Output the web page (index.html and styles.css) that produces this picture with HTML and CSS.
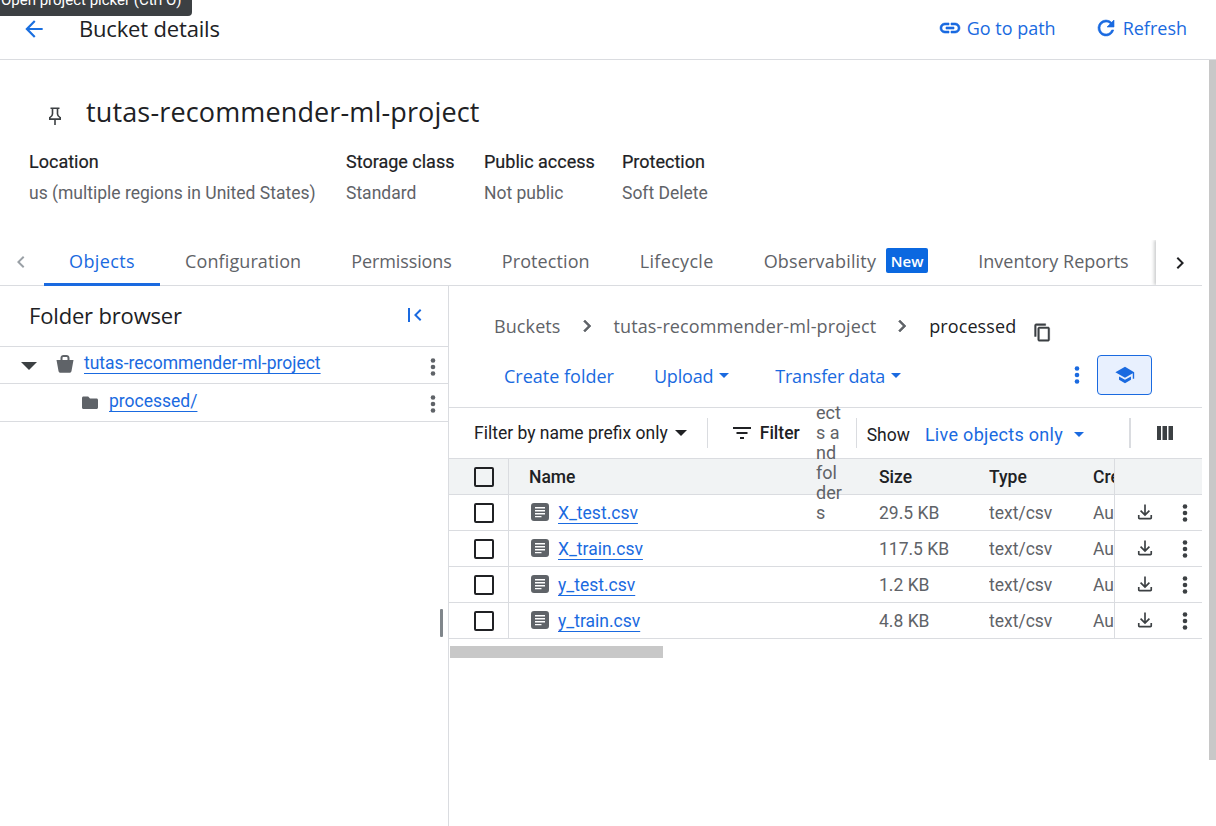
FILE: index.html
```html
<!DOCTYPE html>
<html lang="en">
<head>
<meta charset="utf-8">
<title>Bucket details</title>
<link rel="stylesheet" href="styles.css">
</head>
<body>
<div class="tooltip">Open project picker (Ctrl O)</div>
<div class="page-scrollbar"></div>
<header class="topbar">
  <svg class="back" viewBox="0 0 24 24" width="26" height="26"><path d="M20 11H7.800l5.600-5.600L12 4l-8 8 8 8 1.400-1.400L7.800 13H20z"/></svg>
  <h1 class="page-title">Bucket details</h1>
  <div class="top-actions">
    <a class="top-action"><svg class="heavy" viewBox="0 0 24 24" width="24" height="24"><path d="M3.900 12c0-1.700 1.400-3.100 3.100-3.100h4V7H7c-2.800 0-5 2.200-5 5s2.200 5 5 5h4v-1.900H7c-1.700 0-3.100-1.400-3.100-3.100zM8 13h8v-2H8v2zm9-6h-4v1.900h4c1.700 0 3.100 1.400 3.100 3.100s-1.400 3.100-3.100 3.100h-4V17h4c2.800 0 5-2.200 5-5s-2.200-5-5-5z"/></svg>Go to path</a>
    <a class="top-action"><svg class="heavy" viewBox="0 0 24 24" width="24" height="24"><path d="M17.650 6.350A7.960 7.960 0 0 0 12 4a8 8 0 1 0 7.740 10h-2.080A6 6 0 1 1 12 6c1.660 0 3.140.69 4.220 1.780L13 11h7V4l-2.350 2.350z"/></svg>Refresh</a>
  </div>
</header>

<section class="bucket-head">
  <div class="bucket-title">
    <svg class="pin" viewBox="0 0 14 18" width="14" height="18"><path d="M2.500 1.200h9M4.500 1.200V7c0 1.500-1.300 2.900-2.700 3.600v1.500h10.400v-1.500C10.800 9.900 9.500 8.500 9.500 7V1.200M7 12v6"/></svg>
    <h2>tutas-recommender-ml-project</h2>
  </div>
  <dl class="meta">
    <div class="meta-item"><dt>Location</dt><dd>us (multiple regions in United States)</dd></div>
    <div class="meta-item"><dt>Storage class</dt><dd>Standard</dd></div>
    <div class="meta-item"><dt>Public access</dt><dd>Not public</dd></div>
    <div class="meta-item"><dt>Protection</dt><dd>Soft Delete</dd></div>
  </dl>
</section>

<nav class="tabs">
  <svg class="tab-prev" viewBox="0 0 24 24" width="24" height="24"><path d="M15.400 7.400 14 6l-6 6 6 6 1.400-1.400L10.800 12z"/></svg>
  <a class="tab active">Objects</a>
  <a class="tab">Configuration</a>
  <a class="tab">Permissions</a>
  <a class="tab">Protection</a>
  <a class="tab">Lifecycle</a>
  <a class="tab">Observability<span class="badge">New</span></a>
  <a class="tab">Inventory Reports</a>
  <div class="tab-next"><svg viewBox="0 0 24 24" width="24" height="24"><path d="M8.600 7.400 10 6l6 6-6 6-1.400-1.400L13.200 12z"/></svg></div>
</nav>

<main class="split">
  <aside class="browser">
    <div class="browser-head">
      <h3>Folder browser</h3>
      <svg class="collapse" viewBox="0 0 24 24" width="24" height="24"><path d="M5 5h2v14H5zM18.400 7.400 17 6l-6 6 6 6 1.400-1.400L13.800 12z"/></svg>
    </div>
    <div class="tree-row root">
      <span class="caret"></span>
      <svg class="bucket-ico" viewBox="0 0 20 20" width="20" height="20"><path fill-rule="evenodd" d="M5.500 6V4C5.500 2.300 6.800 1 8.500 1h3c1.700 0 3 1.300 3 3v2h4L16.500 17c-.2 1-1 1.800-2 1.800h-9c-1 0-1.800-.8-2-1.800L1.500 6zM7.500 6h5V4c0-.6-.4-1-1-1h-3c-.6 0-1 .4-1 1z"/></svg>
      <a class="link">tutas-recommender-ml-project</a>
      <svg class="tree-more" viewBox="0 0 24 24" width="24" height="24"><circle cx="12" cy="5.500" r="2.300"/><circle cx="12" cy="12" r="2.300"/><circle cx="12" cy="18.500" r="2.300"/></svg>
    </div>
    <div class="tree-row child">
      <svg class="folder-ico" viewBox="0 0 20 20" width="20" height="20"><path d="M3.500 3.500h4.700l1.800 2h6.500c.9 0 1.500.7 1.500 1.500v7.500c0 .9-.7 1.500-1.500 1.500h-13C2.600 16 2 15.300 2 14.500V5c0-.8.6-1.500 1.500-1.500z"/></svg>
      <a class="link">processed/</a>
      <svg class="tree-more" viewBox="0 0 24 24" width="24" height="24"><circle cx="12" cy="5.500" r="2.300"/><circle cx="12" cy="12" r="2.300"/><circle cx="12" cy="18.500" r="2.300"/></svg>
    </div>
    <div class="resize-handle"></div>
  </aside>

  <section class="objects">
    <div class="crumbs">
      <span class="crumb">Buckets</span>
      <svg class="crumb-sep heavy" viewBox="0 0 24 24" width="24" height="24"><path d="M8.600 7.400 10 6l6 6-6 6-1.400-1.400L13.200 12z"/></svg>
      <span class="crumb">tutas-recommender-ml-project</span>
      <svg class="crumb-sep heavy" viewBox="0 0 24 24" width="24" height="24"><path d="M8.600 7.400 10 6l6 6-6 6-1.400-1.400L13.200 12z"/></svg>
      <span class="crumb current">processed</span>
      <svg class="copy heavy" viewBox="0 0 24 24" width="19" height="19"><path d="M16 1H4c-1.100 0-2 .9-2 2v14h2V3h12V1zm3 4H8c-1.100 0-2 .9-2 2v14c0 1.100.9 2 2 2h11c1.100 0 2-.9 2-2V7c0-1.100-.9-2-2-2zm0 16H8V7h11v14z"/></svg>
    </div>
    <div class="actions">
      <a class="action">Create folder</a>
      <a class="action has-arrow">Upload<span class="arrow"></span></a>
      <a class="action has-arrow">Transfer data<span class="arrow"></span></a>
      <svg class="action-more" viewBox="0 0 24 24" width="24" height="24"><circle cx="12" cy="5.500" r="2.300"/><circle cx="12" cy="12" r="2.300"/><circle cx="12" cy="18.500" r="2.300"/></svg>
      <button class="learn"><svg viewBox="0 0 24 24" width="22" height="22"><path d="M12 3 1.500 9 12 15l8.500-4.860V16H22V9L12 3z"/><path d="M5.500 13.500v3.700L12 21l6.500-3.800v-3.700L12 17.200z"/></svg></button>
    </div>
    <div class="filters">
      <span class="prefix">Filter by name prefix only<span class="arrow dark"></span></span>
      <span class="divider d1"></span>
      <span class="filter"><svg viewBox="0 0 24 24" width="24" height="24"><path d="M3 6h18v2H3zM6.500 11h11v2h-11zM10 16h4v2h-4z"/></svg>Filter</span>
      <span class="squeezed">ects and folders</span>
      <span class="divider d2"></span>
      <span class="show">Show</span>
      <span class="live">Live objects only<span class="arrow"></span></span>
      <span class="divider d3"></span>
      <svg class="columns" viewBox="0 0 24 24" width="24" height="24"><path d="M4 5h4v14H4zM9.500 5h4.500v14H9.500zM15.500 5H20v14h-4.500z"/></svg>
    </div>
    <div class="table">
      <div class="row head">
        <div class="c-check"><span class="box"></span></div>
        <div class="c-name">Name</div>
        <div class="c-size">Size</div>
        <div class="c-type">Type</div>
        <div class="c-created">Created</div>
        <div class="c-actions"></div>
      </div>
      <div class="row">
        <div class="c-check"><span class="box"></span></div>
        <div class="c-name"><svg class="file" viewBox="0 0 18 18" width="18" height="18"><path fill-rule="evenodd" d="M3 0h12a3 3 0 0 1 3 3v12a3 3 0 0 1-3 3H3a3 3 0 0 1-3-3V3a3 3 0 0 1 3-3zm1 4v1.500h10V4zm0 3v1.500h10V7zm0 3v1.500h10V10zm0 3v1.200h6.500V13z"/></svg><a class="link">X_test.csv</a></div>
        <div class="c-size">29.5 KB</div>
        <div class="c-type">text/csv</div>
        <div class="c-created">Aug</div>
        <div class="c-actions"><svg class="dl" viewBox="0 0 24 24" width="20" height="20"><path d="M11 3h2v10.200l3.600-3.600L18 11l-6 6-6-6 1.400-1.400L11 13.200zM3.500 15.500h2V19h13v-3.500h2V19c0 1.100-.9 2-2 2h-13c-1.100 0-2-.9-2-2z"/></svg><svg viewBox="0 0 24 24" width="24" height="24"><circle cx="12" cy="5.500" r="2.300"/><circle cx="12" cy="12" r="2.300"/><circle cx="12" cy="18.500" r="2.300"/></svg></div>
      </div>
      <div class="row">
        <div class="c-check"><span class="box"></span></div>
        <div class="c-name"><svg class="file" viewBox="0 0 18 18" width="18" height="18"><path fill-rule="evenodd" d="M3 0h12a3 3 0 0 1 3 3v12a3 3 0 0 1-3 3H3a3 3 0 0 1-3-3V3a3 3 0 0 1 3-3zm1 4v1.500h10V4zm0 3v1.500h10V7zm0 3v1.500h10V10zm0 3v1.200h6.500V13z"/></svg><a class="link">X_train.csv</a></div>
        <div class="c-size">117.5 KB</div>
        <div class="c-type">text/csv</div>
        <div class="c-created">Aug</div>
        <div class="c-actions"><svg class="dl" viewBox="0 0 24 24" width="20" height="20"><path d="M11 3h2v10.200l3.600-3.600L18 11l-6 6-6-6 1.400-1.400L11 13.200zM3.500 15.500h2V19h13v-3.500h2V19c0 1.100-.9 2-2 2h-13c-1.100 0-2-.9-2-2z"/></svg><svg viewBox="0 0 24 24" width="24" height="24"><circle cx="12" cy="5.500" r="2.300"/><circle cx="12" cy="12" r="2.300"/><circle cx="12" cy="18.500" r="2.300"/></svg></div>
      </div>
      <div class="row">
        <div class="c-check"><span class="box"></span></div>
        <div class="c-name"><svg class="file" viewBox="0 0 18 18" width="18" height="18"><path fill-rule="evenodd" d="M3 0h12a3 3 0 0 1 3 3v12a3 3 0 0 1-3 3H3a3 3 0 0 1-3-3V3a3 3 0 0 1 3-3zm1 4v1.500h10V4zm0 3v1.500h10V7zm0 3v1.500h10V10zm0 3v1.200h6.500V13z"/></svg><a class="link">y_test.csv</a></div>
        <div class="c-size">1.2 KB</div>
        <div class="c-type">text/csv</div>
        <div class="c-created">Aug</div>
        <div class="c-actions"><svg class="dl" viewBox="0 0 24 24" width="20" height="20"><path d="M11 3h2v10.200l3.600-3.600L18 11l-6 6-6-6 1.400-1.400L11 13.200zM3.500 15.500h2V19h13v-3.500h2V19c0 1.100-.9 2-2 2h-13c-1.100 0-2-.9-2-2z"/></svg><svg viewBox="0 0 24 24" width="24" height="24"><circle cx="12" cy="5.500" r="2.300"/><circle cx="12" cy="12" r="2.300"/><circle cx="12" cy="18.500" r="2.300"/></svg></div>
      </div>
      <div class="row">
        <div class="c-check"><span class="box"></span></div>
        <div class="c-name"><svg class="file" viewBox="0 0 18 18" width="18" height="18"><path fill-rule="evenodd" d="M3 0h12a3 3 0 0 1 3 3v12a3 3 0 0 1-3 3H3a3 3 0 0 1-3-3V3a3 3 0 0 1 3-3zm1 4v1.500h10V4zm0 3v1.500h10V7zm0 3v1.500h10V10zm0 3v1.200h6.500V13z"/></svg><a class="link">y_train.csv</a></div>
        <div class="c-size">4.8 KB</div>
        <div class="c-type">text/csv</div>
        <div class="c-created">Aug</div>
        <div class="c-actions"><svg class="dl" viewBox="0 0 24 24" width="20" height="20"><path d="M11 3h2v10.200l3.600-3.600L18 11l-6 6-6-6 1.400-1.400L11 13.200zM3.500 15.500h2V19h13v-3.500h2V19c0 1.100-.9 2-2 2h-13c-1.100 0-2-.9-2-2z"/></svg><svg viewBox="0 0 24 24" width="24" height="24"><circle cx="12" cy="5.500" r="2.300"/><circle cx="12" cy="12" r="2.300"/><circle cx="12" cy="18.500" r="2.300"/></svg></div>
      </div>
    </div>
    <div class="h-scroll"><div class="h-thumb"></div></div>
  </section>
</main>
</body>
</html>
```
FILE: styles.css
```css
* { box-sizing: border-box; }
html, body { height: 100%; }
body {
  margin: 0;
  width: 1216px;
  height: 826px;
  overflow: hidden;
  position: relative;
  background: #fff;
  color: #202124;
  font-family: Roboto, "Liberation Sans", sans-serif;
  font-size: 17.5px;
  display: flex;
  flex-direction: column;
}
h1, h2, h3, dl, dd, dt { margin: 0; font-weight: 400; }
a { color: inherit; }
svg { display: block; flex: none; fill: currentColor; }
.heavy { stroke: currentColor; stroke-width: 0.6px; }

.tooltip {
  position: absolute;
  top: -8px;
  left: -1px;
  height: 24px;
  padding: 0 10px 0 2px;
  background: #3c4043;
  color: #fff;
  border-radius: 0 0 4px 0;
  font-size: 15px;
  line-height: 17px;
  white-space: nowrap;
  z-index: 5;
}
.page-scrollbar {
  position: absolute;
  left: 1209px;
  top: 60px;
  width: 7px;
  height: 700px;
  background: #c8c8c8;
  z-index: 4;
}

.topbar {
  height: 60px;
  flex: none;
  display: flex;
  align-items: center;
  padding: 0 29px 4px 21px;
  border-bottom: 1px solid #dadce0;
}
.back { color: #1a6fe0; margin-top: 2px; }
.page-title { font-family: "Open Sans", sans-serif; font-size: 22px; margin-left: 32px; letter-spacing: -0.17px; }
.top-actions { margin-left: auto; display: flex; gap: 38px; }
.top-action {
  display: flex; align-items: center; gap: 5px;
  color: #1a6ae0;
  font-family: "Open Sans", sans-serif;
  font-size: 18px;
}

.bucket-head { flex: none; height: 178px; padding: 34px 0 0 29px; }
.bucket-title { display: flex; align-items: center; height: 34px; padding-left: 19px; }
.bucket-title .pin { fill: none; stroke: #3c4043; stroke-width: 1.6px; margin-top: 10px; }
.bucket-title h2 { font-family: "Open Sans", sans-serif; font-size: 27px; margin-left: 24px; letter-spacing: 0.14px; white-space: nowrap; }
.meta { display: grid; grid-template-columns: 317px 138px 138px auto; margin-top: 23px; }
.meta dt { font-size: 18px; line-height: 22px; color: #202124; -webkit-text-stroke: 0.2px #202124; }
.meta dd { font-size: 17.5px; line-height: 22px; margin-top: 9px; color: #5f6368; }

.tabs {
  flex: none;
  height: 48px;
  display: flex;
  align-items: stretch;
  border-bottom: 1px solid #dadce0;
  margin-right: 14px;
  position: relative;
  padding-left: 44px;
}
.tab-prev { color: #9aa0a6; position: absolute; left: 9px; top: 12px; }
.tab {
  display: flex; align-items: center;
  padding: 0 25px;
  margin-bottom: -1px;
  font-family: "Open Sans", sans-serif;
  font-size: 18px;
  color: #5f6368;
  white-space: nowrap;
  letter-spacing: 0.1px;
  border-bottom: 3px solid transparent;
}
.tab:nth-of-type(3) { letter-spacing: -0.1px; }
.tab:nth-of-type(5) { letter-spacing: 0.32px; }
.tab:nth-of-type(6) { letter-spacing: 0.18px; }
.tab:nth-of-type(7) { letter-spacing: 0.04px; }
.tab.active { color: #1a6ae0; border-bottom-color: #1a6ae0; letter-spacing: 0.4px; }
.badge {
  margin-left: 10px;
  width: 42px; height: 25px;
  display: flex; align-items: center; justify-content: center;
  background: #0b68e0;
  color: #fff;
  border-radius: 2px;
  font-size: 15px;
  font-weight: 600;
  letter-spacing: 0;
}
.tab-next {
  position: absolute;
  top: 2px; bottom: 0; right: 0;
  width: 46px;
  display: flex; align-items: center; justify-content: center;
  padding-left: 2px;
  background: #fff;
  box-shadow: -2px 0 3px rgba(60,64,67,.25);
  clip-path: inset(0 0 0 -6px);
  color: #202124;
}

.split { flex: 1; display: flex; min-height: 0; }
.browser { width: 449px; flex: none; border-right: 1px solid #dadce0; position: relative; }
.browser-head {
  height: 61px;
  display: flex; align-items: center; justify-content: space-between;
  padding: 0 21px 2px 29px;
  border-bottom: 1px solid #dadce0;
}
.browser-head h3 { font-family: "Open Sans", sans-serif; font-size: 22px; letter-spacing: -0.17px; }
.collapse { color: #1a6ae0; }
.tree-row {
  height: 38px;
  display: flex; align-items: center;
  border-bottom: 1px solid #dadce0;
  padding: 0 3px 0 21px;
  position: relative;
}
.tree-row.root { height: 37px; }
.tree-row.child { padding-left: 80px; }
.caret { width: 0; height: 0; border: 8px solid transparent; border-top-color: #3c4043; border-bottom: 0; margin-right: 18px; margin-top: 2px; }
.bucket-ico { color: #5f6368; margin-bottom: 3px; }
.folder-ico { color: #5f6368; }
.link { color: #1a6ae0; text-decoration: underline; text-underline-offset: 4px; font-size: 17.5px; margin-left: 9px; }
.tree-row .link { margin-bottom: 5px; }
.tree-row.child .link { margin-bottom: 3px; }
.tree-more { color: #5f6368; margin-left: auto; margin-top: 3px; }
.resize-handle {
  position: absolute;
  left: 440px; top: 323px;
  width: 3px; height: 28px;
  background: #80868b;
  border-radius: 1px;
}

.objects { flex: 1; min-width: 0; padding-right: 14px; position: relative; }
.crumbs { height: 60px; display: flex; align-items: center; padding: 20px 0 0 45px; font-family: "Open Sans", sans-serif; font-size: 18px; letter-spacing: 0.1px; color: #5f6368; }
.crumb-sep { margin: 0 15px 0 14px; color: #5f6368; }
.crumb.current { color: #202124; }
.copy { color: #3c4043; margin: 12px 0 0 17px; }

.actions { height: 62px; display: flex; align-items: center; padding: 0 50px 3px 55px; border-bottom: 1px solid #dadce0; }
.action {
  display: flex; align-items: center;
  font-family: "Open Sans", sans-serif;
  font-size: 18px;
  color: #1a6ae0;
  margin-top: 1px;
  margin-right: 40px;
}
.action.has-arrow { margin-right: 46px; letter-spacing: -0.2px; }
.arrow { width: 0; height: 0; border: 5.5px solid transparent; border-top-color: currentColor; border-bottom: 0; margin-left: 6px; }
.action-more { color: #1a6ae0; margin-left: auto; }
.learn {
  width: 55px; height: 40px;
  margin-left: 8px;
  display: flex; align-items: center; justify-content: center;
  border: 1px solid #1a6ae0;
  border-radius: 4px;
  background: #e8f0fe;
  color: #1a6ae0;
  padding: 0;
}

.filters { height: 50px; display: flex; align-items: center; padding-left: 25px; position: relative; }
.prefix { display: flex; align-items: center; }
.prefix .arrow.dark { border-width: 6px; border-bottom: 0; border-top-color: #202124; margin-left: 7px; }
.divider { width: 1px; height: 30px; background: #dadce0; flex: none; }
.d1 { margin-left: 20px; }
.filter { display: flex; align-items: center; gap: 6px; margin-left: 22px; font-weight: 500; }
.squeezed {
  position: absolute;
  left: 367px;
  top: -5px;
  width: 28px;
  font-size: 18px;
  line-height: 20px;
  color: #5f6368;
  word-break: break-all;
  z-index: 2;
}
.d2 { margin-left: 56px; }
.show { margin-left: 10px; margin-top: 3px; }
.live { display: flex; align-items: center; margin-left: 15px; margin-top: 3px; color: #1a6ae0; font-size: 18px; letter-spacing: 0.3px; }
.live .arrow { margin-left: 11px; }
.d3 { margin-left: 45px; width: 2px; }
.columns { margin-left: 22px; color: #3c4043; }

.table { width: 100%; }
.row {
  height: 36px;
  display: grid;
  grid-template-columns: 60px 370px 110px 104px 21px 88px;
  align-items: stretch;
  border-bottom: 1px solid #dadce0;
  color: #5f6368;
}
.row.head { height: 37px; background: #f1f3f4; border-top: 1px solid #dadce0; color: #202124; font-weight: 500; }
.row > div { display: flex; align-items: center; overflow: hidden; white-space: nowrap; }
.c-check { border-right: 1px solid #dadce0; padding-left: 25px; }
.box { width: 20px; height: 20px; border: 2px solid #202124; border-radius: 2px; background: #fff; flex: none; }
.head .box { background: transparent; }
.c-name { padding-left: 20px; }
.file { color: #5f6368; margin-left: 2px; margin-bottom: 2px; }
.row .link { margin-left: 9px; }
.c-actions { border-left: 1px solid #dadce0; padding-left: 20px; gap: 18px; color: #3c4043; background: #fff; }
.dl { margin-bottom: 2px; }
.head .c-actions { background: #f1f3f4; }

.h-scroll { height: 16px; margin-top: 7px; padding-left: 1px; }
.h-thumb { width: 213px; height: 12px; background: #c8c8c8; }
```
